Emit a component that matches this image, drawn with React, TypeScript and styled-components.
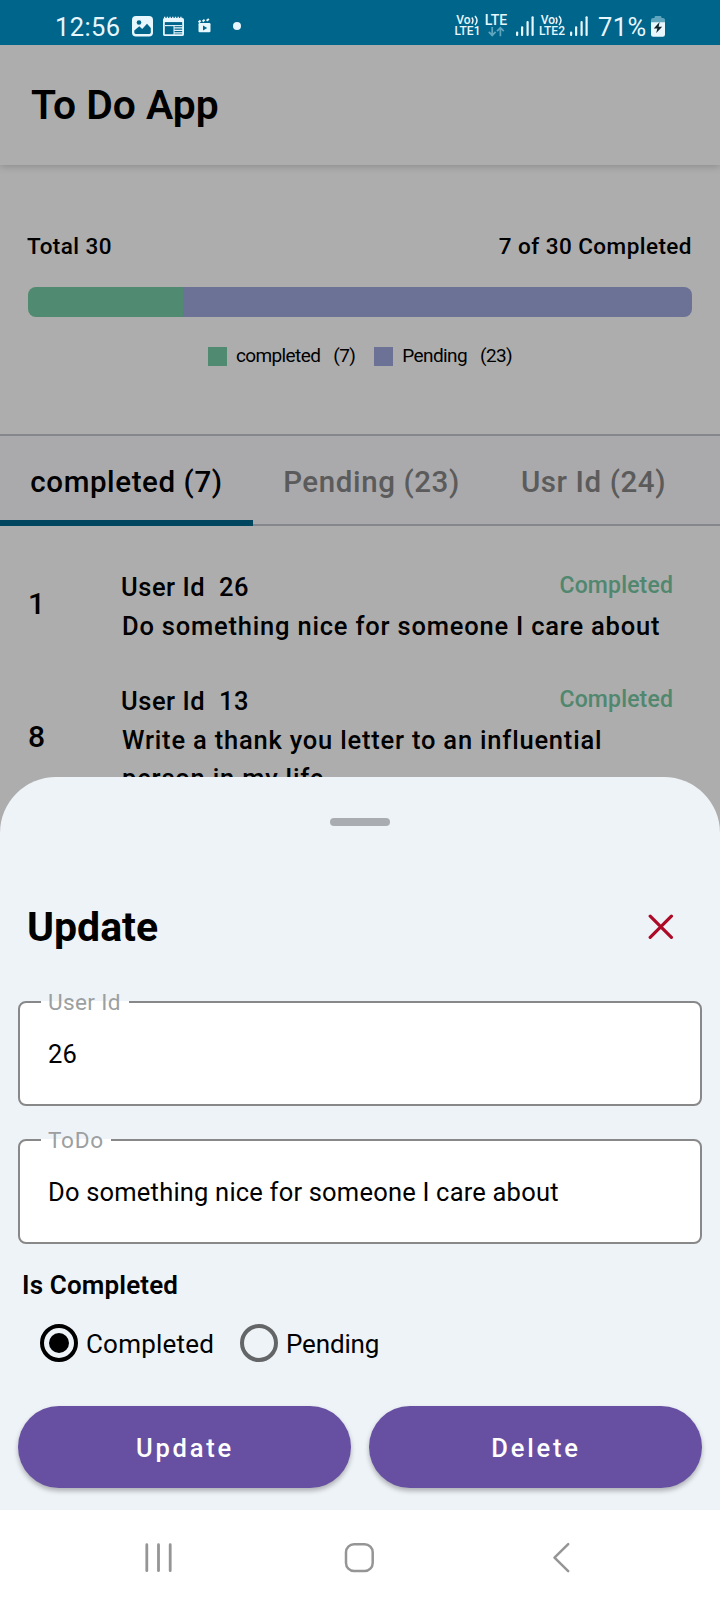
import React, { useState } from "react";
import styled, { createGlobalStyle } from "styled-components";

const GlobalStyle = createGlobalStyle`
  * { box-sizing: border-box; }
  body { margin: 0; background: #fff; font-family: Roboto, "Liberation Sans", sans-serif; color: #000; }
  button, input { font-family: inherit; border: 0; padding: 0; margin: 0; background: none; color: inherit; }
`;

const Screen = styled.div`
  position: relative;
  width: 720px;
  height: 1600px;
  display: flex;
  flex-direction: column;
  overflow: hidden;
`;

/* ---------- status bar ---------- */
const StatusBar = styled.div`
  flex: none;
  height: 45px;
  padding: 8px 55px 0 55px;
  background: #00658b;
  color: #e8f6fd;
  display: flex;
  justify-content: space-between;
`;
const StatusGroup = styled.div`
  display: flex;
  align-items: flex-start;
  height: 37px;
  svg { display: block; flex: none; }
`;
const StatusText = styled.span<{ $width: number; $indent?: number }>`
  width: ${(p) => p.$width}px;
  padding-left: ${(p) => p.$indent ?? 0}px;
  font-size: 25.5px;
  line-height: 38px;
  letter-spacing: 0.4px;
  white-space: nowrap;
`;
const Network = styled.div<{ $width: number; $shift: number }>`
  width: ${(p) => p.$width}px;
  padding-top: 7px;
  padding-right: ${(p) => p.$shift}px;
  display: flex;
  flex-direction: column;
  align-items: center;
  font-size: 12px;
  font-weight: 500;
  line-height: 11px;
`;
const NetworkLine = styled.span<{ $size?: number }>`
  display: flex;
  align-items: center;
  height: 11px;
  font-size: ${(p) => p.$size ?? 12}px;
  white-space: nowrap;
`;

/* ---------- page ---------- */
const Page = styled.div`
  position: relative;
  flex: 1;
  min-height: 0;
  overflow: hidden;
  background: #fff;
`;
const Scrim = styled.div`
  position: absolute;
  inset: 0;
  background: rgba(0, 0, 0, 0.32);
`;
const AppBar = styled.header`
  height: 120px;
  padding-left: 31px;
  display: flex;
  align-items: center;
  box-shadow: 0 2px 7px rgba(0, 0, 0, 0.18);
`;
const AppTitle = styled.h1`
  margin: 0;
  font-size: 40.8px;
  line-height: 48px;
  font-weight: 600;
`;
const Summary = styled.section`
  height: 269px;
  padding: 62px 28px 0 28px;
`;
const SummaryRow = styled.div`
  display: flex;
  justify-content: space-between;
  margin-left: -1px;
  font-size: 22.5px;
  font-weight: 500;
  line-height: 38px;
  letter-spacing: 0.45px;
`;
const ProgressBar = styled.div`
  display: flex;
  height: 30px;
  margin-top: 22px;
  border-radius: 8px;
  overflow: hidden;
`;
const Segment = styled.div<{ $color: string; $width?: number }>`
  background: ${(p) => p.$color};
  ${(p) => (p.$width ? `width: ${p.$width}px;` : "flex: 1;")}
`;
const Legend = styled.div`
  display: flex;
  justify-content: center;
  gap: 19px;
  margin-top: 30px;
`;
const LegendItem = styled.div`
  display: flex;
  align-items: flex-start;
  height: 19px;
  font-size: 19px;
  line-height: 17px;
  letter-spacing: -0.6px;
  white-space: nowrap;
`;
const Swatch = styled.span<{ $color: string }>`
  width: 19px;
  height: 19px;
  margin-right: 9px;
  background: ${(p) => p.$color};
`;
const LegendCount = styled.span`
  margin-left: 13px;
`;

const Tabs = styled.nav`
  display: flex;
  height: 92px;
  border-top: 2px solid #c6c6d0;
  background: #fbfbfe;
  box-shadow: inset 0 -2px #c6c6d0;
`;
const Tab = styled.button<{ $active?: boolean; $width: number }>`
  width: ${(p) => p.$width}px;
  height: 90px;
  border-bottom: 6px solid ${(p) => (p.$active ? "#00688d" : "transparent")};
  color: ${(p) => (p.$active ? "#000" : "#878787")};
  font-size: 29.5px;
  font-weight: 500;
  letter-spacing: 0.6px;
  padding-top: 7px;
  white-space: nowrap;
`;

const List = styled.ul`
  margin: 0;
  padding: 42px 47px 0 28px;
  list-style: none;
  display: flex;
  flex-direction: column;
  gap: 37px;
`;
const Row = styled.li`
  display: flex;
  align-items: center;
`;
const RowNumber = styled.span`
  width: 93px;
  padding-bottom: 6px;
  font-size: 30px;
  font-weight: 500;
`;
const RowBody = styled.div`
  flex: 1;
  font-size: 25.5px;
  font-weight: 500;
  line-height: 38px;
  letter-spacing: 0.8px;
`;
const RowTop = styled.div`
  display: flex;
  height: 39px;
`;
const RowUser = styled.span`
  white-space: pre;
  flex: 1;
  letter-spacing: 0.55px;
`;
const RowStatus = styled.span`
  font-size: 23px;
  line-height: 36px;
  letter-spacing: 0.15px;
  color: #76c8a2;
`;
const RowTitle = styled.div`
  padding-left: 1px;
`;

/* ---------- bottom sheet ---------- */
const Sheet = styled.section`
  position: absolute;
  left: 0;
  right: 0;
  top: 777px;
  height: 733px;
  padding: 41px 18px 0;
  border-radius: 56px 56px 0 0;
  background: #eef3f8;
`;
const Handle = styled.div`
  width: 60px;
  height: 8px;
  margin: 0 auto;
  border-radius: 4px;
  background: #a9adb2;
`;
const SheetHeader = styled.div`
  display: flex;
  justify-content: space-between;
  align-items: center;
  height: 50px;
  margin: 76px 28px 49px 9px;
`;
const SheetTitle = styled.h2`
  margin: 0;
  font-size: 41px;
  font-weight: 700;
  line-height: 50px;
`;
const CloseButton = styled.button`
  width: 26px;
  height: 26px;
  svg { display: block; }
`;
const Field = styled.label`
  position: relative;
  display: block;
  height: 105px;
  margin-bottom: 33px;
  border: 2px solid #888;
  border-radius: 8px;
  background: #fff;
`;
const FieldLabel = styled.span<{ $width: number; $spacing: number }>`
  position: absolute;
  left: 21px;
  top: -19px;
  width: ${(p) => p.$width}px;
  height: 38px;
  padding-left: 7px;
  background: linear-gradient(#eef3f8 17px, #fff 17px);
  color: #9c9fa1;
  font-size: 22.6px;
  line-height: 38px;
  letter-spacing: ${(p) => p.$spacing}px;
  white-space: nowrap;
`;
const FieldInput = styled.input`
  display: block;
  width: 100%;
  height: 101px;
  padding: 1px 28px 0;
  font-size: 25.5px;
  letter-spacing: 0.2px;
  outline: none;
`;
const GroupTitle = styled.h3`
  margin: -17px 0 0 4px;
  font-size: 26px;
  line-height: 50px;
  font-weight: 600;
  letter-spacing: 0.15px;
`;
const Radios = styled.div`
  display: flex;
  height: 38px;
  margin: 14px 0 44px 22px;
`;
const Radio = styled.button<{ $width: number; $spacing: number }>`
  display: flex;
  align-items: center;
  gap: 8px;
  width: ${(p) => p.$width}px;
  height: 38px;
  font-size: 26px;
  letter-spacing: ${(p) => p.$spacing}px;
  white-space: nowrap;
`;
const Ring = styled.span<{ $on: boolean }>`
  flex: none;
  display: flex;
  align-items: center;
  justify-content: center;
  width: 38px;
  height: 38px;
  border: 4px solid ${(p) => (p.$on ? "#000" : "#636567")};
  border-radius: 50%;
  &::after {
    content: "";
    width: 20px;
    height: 20px;
    border-radius: 50%;
    background: ${(p) => (p.$on ? "#000" : "transparent")};
  }
`;
const RadioText = styled.span`
  line-height: 38px;
  padding-top: 2px;
`;
const Actions = styled.div`
  display: flex;
  gap: 18px;
`;
const ActionButton = styled.button`
  flex: 1;
  height: 82px;
  border-radius: 41px;
  background: #6750a2;
  box-shadow: 0 3px 5px rgba(0, 0, 0, 0.28);
  color: #fff;
  font-size: 25.5px;
  font-weight: 500;
  letter-spacing: 2.8px;
  padding: 1px 0 0 1px;
`;

const NavBar = styled.nav`
  flex: none;
  height: 90px;
  padding: 32px 150px 0 144px;
  display: flex;
  justify-content: space-between;
  background: #fff;
`;

/* ---------- icons ---------- */
const ImageIcon = () => (
  <svg width="31" height="30" viewBox="0 0 31 30">
    <rect x="0" y="8" width="21" height="20.5" rx="4" fill="#e8f6fd" />
    <circle cx="7" cy="14.5" r="2.3" fill="#00658b" />
    <path d="M2.3 24.6 V22.6 L7.3 18.2 L10.2 21 L15 15.8 L18.8 20 V24.6 Q18.8 26 17.4 26 H3.7 Q2.3 26 2.3 24.6Z" fill="#00658b" />
  </svg>
);
const CalendarIcon = () => (
  <svg width="35" height="30" viewBox="0 0 35 30" fill="none" stroke="#e8f6fd">
    <rect x="0.9" y="11" width="19.2" height="16.2" rx="1" strokeWidth="1.8" />
    <path d="M0.5 12.4H20.5" strokeWidth="3.4" />
    <path d="M1 9.8H20" strokeWidth="2" strokeDasharray="1.4 1.3" />
    <path d="M2 17.6H19" strokeWidth="1.1" />
    <path d="M11 17V27" strokeWidth="1" />
    <path d="M11 19.8H20M11 22.3H20M11 24.8H20" strokeWidth="1.3" />
  </svg>
);
const ClapperIcon = () => (
  <svg width="35" height="30" viewBox="0 0 35 30">
    <rect x="0.5" y="15" width="12" height="9.3" rx="1.2" fill="#e8f6fd" />
    <path d="M0.6 14.4L2.6 12.6M4.6 13.6L6.6 11.8M8.6 12.8L10.9 11" stroke="#e8f6fd" strokeWidth="2" />
    <path d="M5 17.5L9.2 20L5 22.5Z" fill="#00658b" />
  </svg>
);
const DotIcon = () => (
  <svg width="8" height="30" viewBox="0 0 8 30">
    <circle cx="4" cy="18" r="4" fill="#e8f6fd" />
  </svg>
);
const Waves = () => (
  <svg width="8" height="11" viewBox="0 0 8 11" fill="none" stroke="#e8f6fd" strokeWidth="1.5">
    <path d="M0.8 2.6Q3.2 5.5 0.8 8.8M4 1Q8 5.5 4 10" />
  </svg>
);
const DataArrows = () => (
  <svg width="17" height="11" viewBox="0 0 17 11" fill="none" stroke="#5fa5bd" strokeWidth="1.7">
    <path d="M4.2 1V9.4M0.8 5.8L4.2 9.4L7.6 5.8M12.4 10.2V1.8M9 5.2L12.4 1.8L15.8 5.2" />
  </svg>
);
const Signal = () => (
  <svg width="20" height="30" viewBox="0 0 20 30" fill="#e8f6fd">
    <rect x="0" y="23.6" width="2.2" height="4.4" rx="1" />
    <rect x="5" y="18.3" width="2.2" height="9.7" rx="1" />
    <rect x="10.5" y="13" width="2.2" height="15" rx="1" />
    <rect x="15.5" y="8.3" width="2.2" height="19.7" rx="1" />
  </svg>
);
const BatteryIcon = () => (
  <svg width="14" height="30" viewBox="0 0 14 30">
    <path d="M0 15V12Q0 10 2 10H3.5V9.2Q3.5 8 4.7 8H9.3Q10.5 8 10.5 9.2V10H12Q14 10 14 12V15Z" fill="#5fa5bd" />
    <path d="M0 14.3H14V26.4Q14 28.7 11.8 28.7H2.2Q0 28.7 0 26.4Z" fill="#e8f6fd" />
    <path d="M8.6 14L2.8 20.4H6.4L5.2 25L11.2 18.8H7.6Z" fill="#10222b" />
  </svg>
);
const CloseIcon = () => (
  <svg width="26" height="26" viewBox="0 0 26 26" fill="none" stroke="#ad0a27" strokeWidth="3.2" strokeLinecap="round">
    <path d="M2.2 2.2L23.4 23.4M23.4 2.2L2.2 23.4" />
  </svg>
);
const RecentsIcon = () => (
  <svg width="30" height="32" viewBox="0 0 30 32" fill="none" stroke="#959595" strokeWidth="2.8" strokeLinecap="round">
    <path d="M2.8 2.7V28.7M14.5 2.7V28.7M26.2 2.7V28.7" />
  </svg>
);
const HomeIcon = () => (
  <svg width="40" height="32" viewBox="0 0 40 32" fill="none" stroke="#959595" strokeWidth="2.5">
    <rect x="3" y="2.3" width="26.7" height="26.7" rx="8" />
  </svg>
);
const BackIcon = () => (
  <svg width="18" height="32" viewBox="0 0 18 32" fill="none" stroke="#959595" strokeWidth="2.5" strokeLinecap="round" strokeLinejoin="round">
    <path d="M16.2 2.2L2.5 15.7L16.2 29.2" />
  </svg>
);

const GREEN = "#76cca6";
const INDIGO = "#9fa8de";

const todos = [
  { id: 1, user: 26, title: "Do something nice for someone I care about" },
  { id: 8, user: 13, title: "Write a thank you letter to an influential person in my life" },
];

export default function App() {
  const [completed, setCompleted] = useState(true);
  return (
    <>
      <GlobalStyle />
      <Screen>
        <StatusBar>
          <StatusGroup>
            <StatusText $width={77}>12:56</StatusText>
            <ImageIcon />
            <CalendarIcon />
            <ClapperIcon />
            <DotIcon />
          </StatusGroup>
          <StatusGroup>
            <Network $width={27} $shift={2}>
              <NetworkLine>Vo<Waves /></NetworkLine>
              <NetworkLine>LTE1</NetworkLine>
            </Network>
            <Network $width={34} $shift={6}>
              <NetworkLine $size={14}>LTE</NetworkLine>
              <DataArrows />
            </Network>
            <Signal />
            <Network $width={34} $shift={2}>
              <NetworkLine>Vo<Waves /></NetworkLine>
              <NetworkLine>LTE2</NetworkLine>
            </Network>
            <Signal />
            <StatusText $width={61} $indent={8}>71%</StatusText>
            <BatteryIcon />
          </StatusGroup>
        </StatusBar>

        <Page>
          <AppBar>
            <AppTitle>To Do App</AppTitle>
          </AppBar>
          <Summary>
            <SummaryRow>
              <span>Total 30</span>
              <span>7 of 30 Completed</span>
            </SummaryRow>
            <ProgressBar>
              <Segment $color={GREEN} $width={155} />
              <Segment $color={INDIGO} />
            </ProgressBar>
            <Legend>
              <LegendItem>
                <Swatch $color={GREEN} />
                completed<LegendCount>(7)</LegendCount>
              </LegendItem>
              <LegendItem>
                <Swatch $color={INDIGO} />
                Pending<LegendCount>(23)</LegendCount>
              </LegendItem>
            </Legend>
          </Summary>
          <Tabs>
            <Tab $active $width={253}>completed (7)</Tab>
            <Tab $width={237}>Pending (23)</Tab>
            <Tab $width={207}>Usr Id (24)</Tab>
          </Tabs>
          <List>
            {todos.map((t) => (
              <Row key={t.id}>
                <RowNumber>{t.id}</RowNumber>
                <RowBody>
                  <RowTop>
                    <RowUser>{`User Id  ${t.user}`}</RowUser>
                    <RowStatus>Completed</RowStatus>
                  </RowTop>
                  <RowTitle>{t.title}</RowTitle>
                </RowBody>
              </Row>
            ))}
          </List>
          <Scrim />
        </Page>

        <Sheet>
          <Handle />
          <SheetHeader>
            <SheetTitle>Update</SheetTitle>
            <CloseButton aria-label="Close">
              <CloseIcon />
            </CloseButton>
          </SheetHeader>
          <Field>
            <FieldLabel $width={88} $spacing={0.35}>User Id</FieldLabel>
            <FieldInput defaultValue="26" />
          </Field>
          <Field>
            <FieldLabel $width={70} $spacing={0.7}>ToDo</FieldLabel>
            <FieldInput defaultValue="Do something nice for someone I care about" />
          </Field>
          <GroupTitle>Is Completed</GroupTitle>
          <Radios>
            <Radio $width={200} $spacing={0.2} onClick={() => setCompleted(true)}>
              <Ring $on={completed} />
              <RadioText>Completed</RadioText>
            </Radio>
            <Radio $width={160} $spacing={-0.15} onClick={() => setCompleted(false)}>
              <Ring $on={!completed} />
              <RadioText>Pending</RadioText>
            </Radio>
          </Radios>
          <Actions>
            <ActionButton>Update</ActionButton>
            <ActionButton>Delete</ActionButton>
          </Actions>
        </Sheet>

        <NavBar>
          <RecentsIcon />
          <HomeIcon />
          <BackIcon />
        </NavBar>
      </Screen>
    </>
  );
}
